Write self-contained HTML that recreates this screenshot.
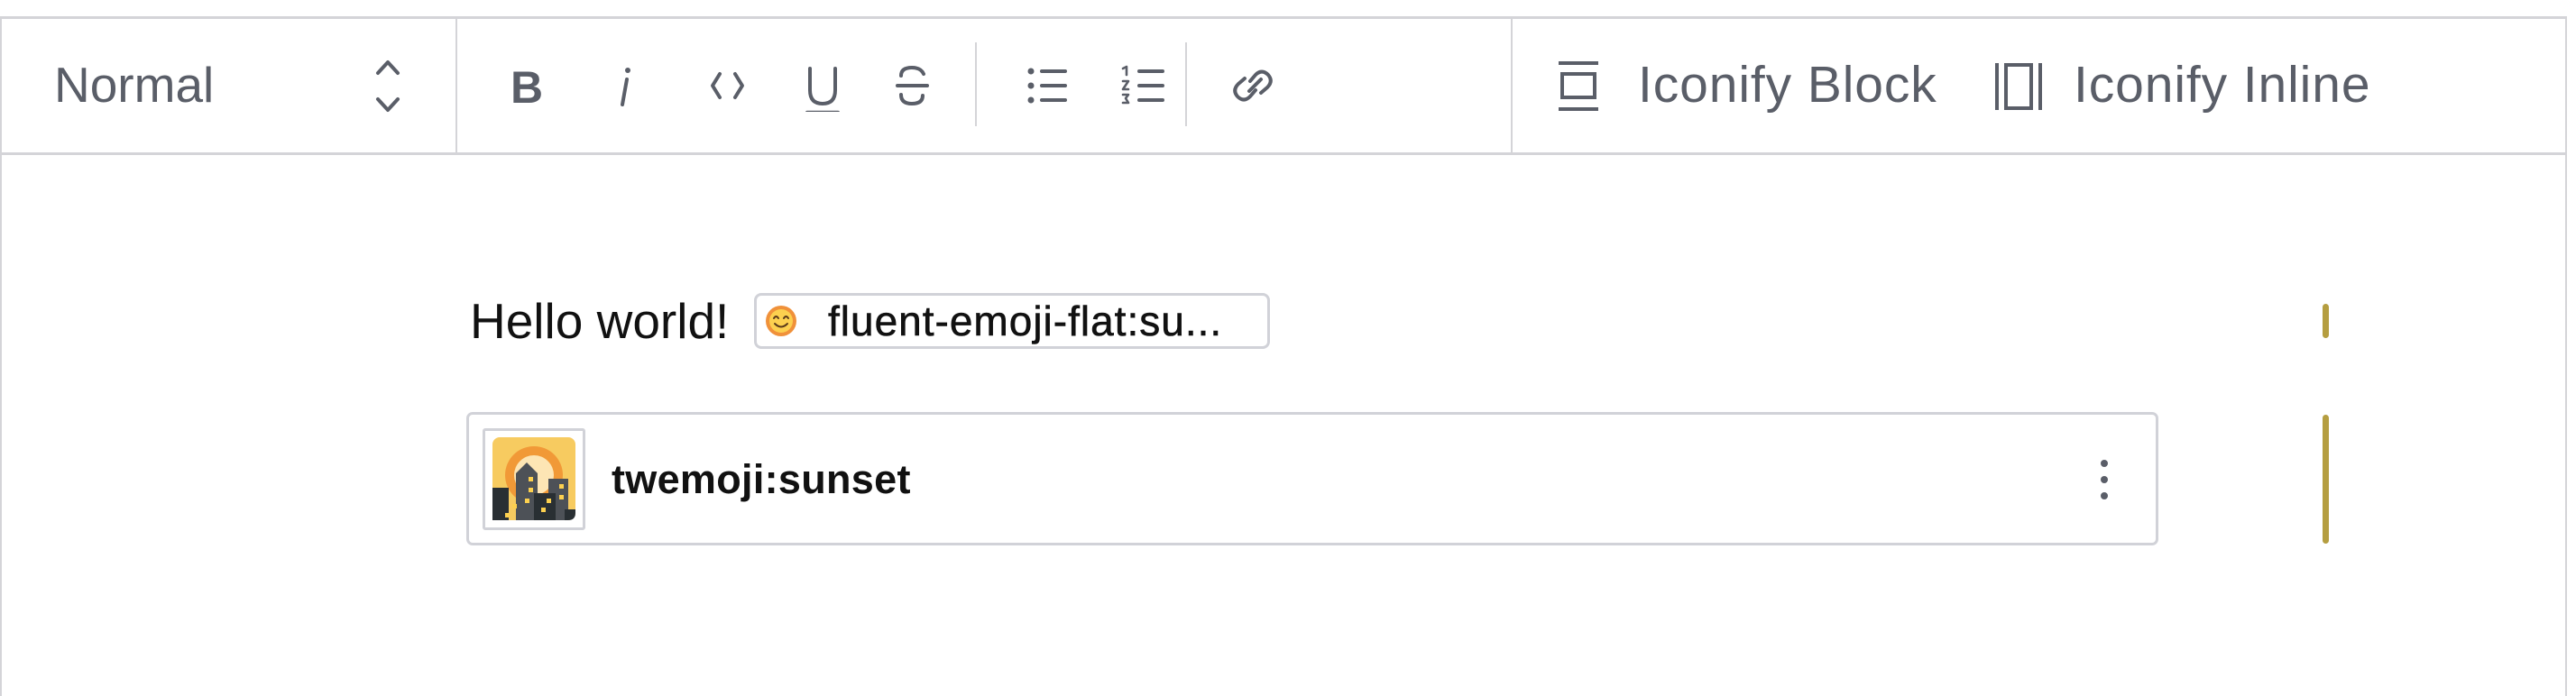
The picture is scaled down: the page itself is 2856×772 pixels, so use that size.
<!DOCTYPE html>
<html><head><meta charset="utf-8"><style>
*{margin:0;padding:0;box-sizing:border-box}
body{width:2856px;height:772px;background:#fff;position:relative;overflow:hidden;font-family:"Liberation Sans",Arial,sans-serif}
.a{position:absolute}
.tb{color:#5a5e68}
</style></head><body>
<div class="a" style="left:0;top:18px;width:2846px;height:754px;border-left:2px solid #d4d4d8;border-right:2px solid #d4d4d8;border-top:3px solid #d4d4d8"></div>
<div class="a" style="left:0;top:169px;width:2846px;height:3px;background:#d4d4d8"></div>
<div class="a" style="left:505px;top:20px;width:2px;height:150px;background:#d4d4d8"></div>
<div class="a" style="left:1675px;top:20px;width:2px;height:150px;background:#d4d4d8"></div>
<div class="a" style="left:1081px;top:47px;width:2px;height:93px;background:#d4d4d8"></div>
<div class="a" style="left:1314px;top:47px;width:2px;height:93px;background:#d4d4d8"></div>

<div class="a tb" style="left:60px;top:62px;font-size:55px;line-height:64px">Normal</div>
<svg class="a" style="left:413px;top:64px" width="34" height="64" viewBox="0 0 34 64" fill="none" stroke="#5a5e68" stroke-width="4" stroke-linecap="round" stroke-linejoin="round"><path d="M6 17 L17 5 L28 17"/><path d="M6 46 L17 58 L28 46"/></svg>

<svg class="a" style="left:560px;top:70px" width="860" height="54" viewBox="0 0 860 54" fill="none" stroke="#5a5e68" stroke-linecap="round" stroke-linejoin="round">
<text x="6" y="44" font-family="Liberation Sans" font-weight="bold" font-size="50" fill="#5a5e68" stroke="none">B</text>
<path d="M135 18 L130 46" stroke-width="4"/><circle cx="136" cy="8" r="3" fill="#5a5e68" stroke="none"/>
<path d="M238 12 L230 25 L238 38 M255 12 L263 25 L255 38" stroke-width="4"/>
<path d="M338 6 V30 Q338 45 352 45 Q366 45 366 30 V6" stroke-width="4"/><path d="M335 55 H369" stroke-width="4.5"/>
<path d="M464 12 Q461 5 451 5 Q439 5 439 14 M439 35 Q439 45 451 45 Q463 45 463 36" stroke-width="4"/><path d="M435 25 H468" stroke-width="4"/>
<circle cx="583" cy="9" r="3.5" fill="#5a5e68" stroke="none"/><circle cx="583" cy="25" r="3.5" fill="#5a5e68" stroke="none"/><circle cx="583" cy="41" r="3.5" fill="#5a5e68" stroke="none"/>
<path d="M595 9 H621 M595 25 H621 M595 41 H621" stroke-width="4"/>
<path d="M685 6 L689 4 V13 M685 20 H691 L685 29 H691 M685 35 H691 L688 39 L691 44 H685" stroke-width="2.6"/>
<path d="M703 9 H729 M703 25 H729 M703 41 H729" stroke-width="4"/>
<path d="M832 30 L826 37 Q819 44 812 37 Q806 30 813 23 L820 17 M826 20 L832 13 Q839 6 846 13 Q852 20 845 27 L838 33 M825 31 L838 18" stroke-width="4"/>
</svg>

<svg class="a" style="left:1726px;top:66px" width="50" height="60" viewBox="0 0 50 60" fill="none" stroke="#5a5e68" stroke-width="4"><path d="M2 4 H46 M2 55 H46"/><rect x="6" y="16" width="36" height="26"/></svg>
<div class="a tb" style="left:1816px;top:62px;font-size:57px;line-height:64px;letter-spacing:0.9px">Iconify Block</div>
<svg class="a" style="left:2210px;top:66px" width="56" height="60" viewBox="0 0 56 60" fill="none" stroke="#5a5e68" stroke-width="4"><path d="M4 4 V56 M52 4 V56"/><rect x="14" y="6" width="28" height="48"/></svg>
<div class="a tb" style="left:2299px;top:62px;font-size:57px;line-height:64px;letter-spacing:0.9px">Iconify Inline</div>

<div class="a" style="left:521px;top:326px;font-size:55px;line-height:60px;color:#111">Hello world!</div>
<div class="a" style="left:836px;top:325px;width:572px;height:62px;border:3px solid #d1d2d8;border-radius:8px"></div>
<svg class="a" style="left:848px;top:338px" width="36" height="36" viewBox="0 0 36 36"><g fill="#f0913a"><circle cx="18" cy="18" r="17"/></g><circle cx="18" cy="18" r="13" fill="#fcd04f"/><path d="M10 15 Q12.5 11 15 15 M21 15 Q23.5 11 26 15 M11 21 Q18 28 25 21" fill="none" stroke="#5a3a1a" stroke-width="2" stroke-linecap="round"/></svg>
<div class="a" style="left:918px;top:330px;font-size:46px;line-height:52px;color:#111;letter-spacing:1px;-webkit-text-stroke:0.6px #111">fluent-emoji-flat:su...</div>

<div class="a" style="left:517px;top:457px;width:1876px;height:148px;border:3px solid #d1d2d8;border-radius:7px"></div>
<div class="a" style="left:535px;top:475px;width:114px;height:113px;border:3px solid #d1d2d8;border-radius:3px"></div>
<svg class="a" style="left:546px;top:485px" width="92" height="92" viewBox="0 0 92 92">
<rect width="92" height="92" rx="8" fill="#f7cb60"/>
<circle cx="46" cy="42" r="32" fill="#f19937"/>
<circle cx="46" cy="42" r="22" fill="#fde5b4"/>
<path d="M0 56 H18 V92 H0Z" fill="#292f33"/>
<path d="M26 40 L38 28 L50 40 V92 H26Z" fill="#4d5157"/>
<path d="M62 46 H84 V92 H62Z" fill="#4d5157"/>
<path d="M46 62 H70 V92 H46Z" fill="#292f33"/>
<path d="M80 80 H92 V84 Q92 92 84 92 H80Z" fill="#292f33"/>
<g fill="#fcd04f"><rect x="40" y="44" width="5" height="5"/><rect x="40" y="56" width="5" height="5"/><rect x="36" y="68" width="5" height="5"/><rect x="74" y="52" width="5" height="5"/><rect x="74" y="64" width="5" height="5"/><rect x="60" y="68" width="5" height="5"/><rect x="54" y="78" width="5" height="5"/><rect x="22" y="74" width="5" height="5"/><rect x="14" y="84" width="5" height="5"/></g>
</svg>
<div class="a" style="left:678px;top:506px;font-size:45px;line-height:52px;font-weight:bold;color:#111;letter-spacing:0.3px">twemoji:sunset</div>
<div class="a" style="left:2329px;top:510px;width:8px;height:8px;border-radius:50%;background:#5a5e68"></div>
<div class="a" style="left:2329px;top:528px;width:8px;height:8px;border-radius:50%;background:#5a5e68"></div>
<div class="a" style="left:2329px;top:546px;width:8px;height:8px;border-radius:50%;background:#5a5e68"></div>

<div class="a" style="left:2575px;top:337px;width:7px;height:38px;border-radius:4px;background:#b59e40"></div>
<div class="a" style="left:2575px;top:460px;width:7px;height:143px;border-radius:4px;background:#b59e40"></div>
</body></html>
